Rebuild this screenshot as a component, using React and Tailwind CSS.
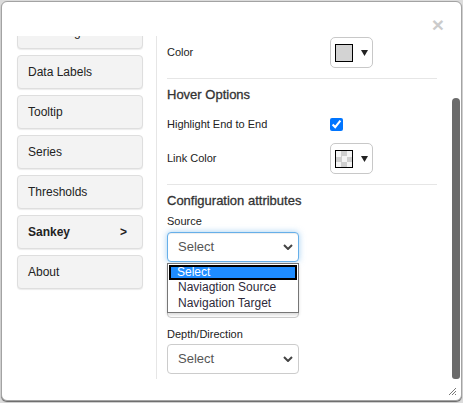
const navItems = [
  { label: "Chart Legend" },
  { label: "Data Labels" },
  { label: "Tooltip" },
  { label: "Series" },
  { label: "Thresholds" },
  { label: "Sankey", active: true },
  { label: "About" },
];

function Chevron() {
  return (
    <svg width="10" height="6" viewBox="0 0 10 6" className="absolute right-[5px] top-1/2 -translate-y-1/2">
      <path d="M1 1 L5 5 L9 1" fill="none" stroke="#444" strokeWidth="2" />
    </svg>
  );
}

function FakeSelect({ focused, covered }) {
  return (
    <div
      className={`relative h-[30px] w-[132px] rounded-[4px] border bg-white pl-[10px] flex items-center text-[13px] text-[#555] ${
        focused
          ? "border-[#66afe9] shadow-[inset_0_1px_1px_rgba(0,0,0,0.075),0_0_6px_rgba(102,175,233,0.6)]"
          : "border-[#ccc]"
      }`}
    >
      {!covered && "Select"}
      {!covered && <Chevron />}
    </div>
  );
}

function SwatchButton({ checkered }) {
  return (
    <div className="h-[31px] w-[43px] rounded-[5px] border border-[#c8c8c8] bg-white flex items-center pl-[4px] gap-[8px]">
      <div
        className={`h-[18px] w-[18px] border border-black ${
          checkered
            ? "bg-[conic-gradient(#cfcfcf_25%,#f4f4f4_0_50%,#cfcfcf_0_75%,#f4f4f4_0)] bg-[length:11px_11px]"
            : "bg-[#d3d3d3]"
        }`}
      />
      <svg width="7" height="6" viewBox="0 0 7 6">
        <path d="M0 0 H7 L3.5 6 Z" fill="#222" />
      </svg>
    </div>
  );
}

export default function App() {
  return (
    <div className="w-[463px] h-[403px] bg-[#dcdcdc] font-['Liberation_Sans',Arial,sans-serif] pl-[1px] pt-[1px]">
      <div className="relative w-[461px] h-[400px] rounded-[6px] border border-[#a3a3a3] bg-white shadow-[0_1px_1px_rgba(0,0,0,0.55)] flex flex-col">
        {/* header */}
        <div className="relative h-[34px] shrink-0">
          <span className="absolute right-[17px] top-[12px] text-[21px] font-bold leading-none text-black opacity-20">
            ×
          </span>
        </div>

        {/* body */}
        <div className="flex h-[343px] shrink-0">
          <div className="w-[155px] shrink-0 border-r border-[#e6e6e6] overflow-hidden pl-[15px]">
            <div className="-mt-[21px] flex flex-col gap-[6px]">
              {navItems.map((item) => (
                <div
                  key={item.label}
                  className={`h-[34px] w-[126px] shrink-0 rounded-[4px] border border-[#dedede] bg-[#f3f3f3] shadow-[0_1px_1px_rgba(0,0,0,0.08)] flex items-center justify-between pl-[10px] pr-[15px] text-[12px] text-[#222] ${
                    item.active ? "font-bold" : ""
                  }`}
                >
                  <span>{item.label}</span>
                  {item.active && <span>&gt;</span>}
                </div>
              ))}
            </div>
          </div>

          <div className="flex-1 flex overflow-hidden">
            <div className="w-[280px] pl-[10px] pt-[1px] text-[#222]">
              <div className="flex items-center h-[31px]">
                <span className="w-[163px] text-[11px]">Color</span>
                <SwatchButton />
              </div>
              <div className="mt-[10px] h-px w-[270px] bg-[#e6e6e6]" />
              <div className="mt-[8px] text-[13px] leading-[16px] text-[#333] [-webkit-text-stroke:0.3px_#333]">
                Hover Options
              </div>
              <div className="mt-[13px] flex items-center h-[16px]">
                <span className="w-[163px] text-[11px]">Highlight End to End</span>
                <input type="checkbox" defaultChecked readOnly className="m-0 h-[13px] w-[13px] accent-[#0075ff]" />
              </div>
              <div className="mt-[11px] flex items-center h-[31px]">
                <span className="w-[163px] text-[11px]">Link Color</span>
                <SwatchButton checkered />
              </div>
              <div className="mt-[10px] h-px w-[270px] bg-[#e6e6e6]" />
              <div className="mt-[8px] text-[13px] leading-[16px] text-[#333] [-webkit-text-stroke:0.3px_#333]">
                Configuration attributes
              </div>

              <div className="mt-[5px] text-[11px] leading-[14px]">Source</div>
              <div className="relative mt-[4px]">
                <FakeSelect focused />
                <div className="absolute left-0 top-[31px] z-10 w-[132px] border border-[#767676] bg-white p-px text-[12px] leading-[15.5px] shadow-[0_2px_3px_rgba(0,0,0,0.15)]">
                  <div className="bg-[#1e8cff] text-white pl-[8px] outline-2 outline-black -outline-offset-2 leading-[15px]">
                    Select
                  </div>
                  <div className="pl-[9px] text-[#2e2a3a]">Naviagtion Source</div>
                  <div className="pl-[9px] text-[#2e2a3a]">Navigation Target</div>
                </div>
              </div>

              {/* label hidden beneath the open list */}
              <div className="mt-[8px] h-[14px]" />
              <div className="mt-[4px]">
                <FakeSelect covered />
              </div>

              <div className="mt-[9px] text-[11px] leading-[14px]">Depth/Direction</div>
              <div className="mt-[3px]">
                <FakeSelect />
              </div>
            </div>

            <div className="ml-auto w-[8px] mr-[1px] pt-[62px] shrink-0">
              <div className="h-[281px] w-[8px] rounded-t-[4px] rounded-b-[3px] bg-[#6b6b6b]" />
            </div>
          </div>
        </div>

        {/* footer with resize grip */}
        <div className="relative flex-1">
          <svg width="9" height="9" viewBox="0 0 9 9" className="absolute right-[4px] bottom-[4px]">
            <path d="M8 1 L1 8 M8 4 L4 8 M8 7 L7 8" stroke="#777" strokeWidth="1" />
          </svg>
        </div>
      </div>
    </div>
  );
}
